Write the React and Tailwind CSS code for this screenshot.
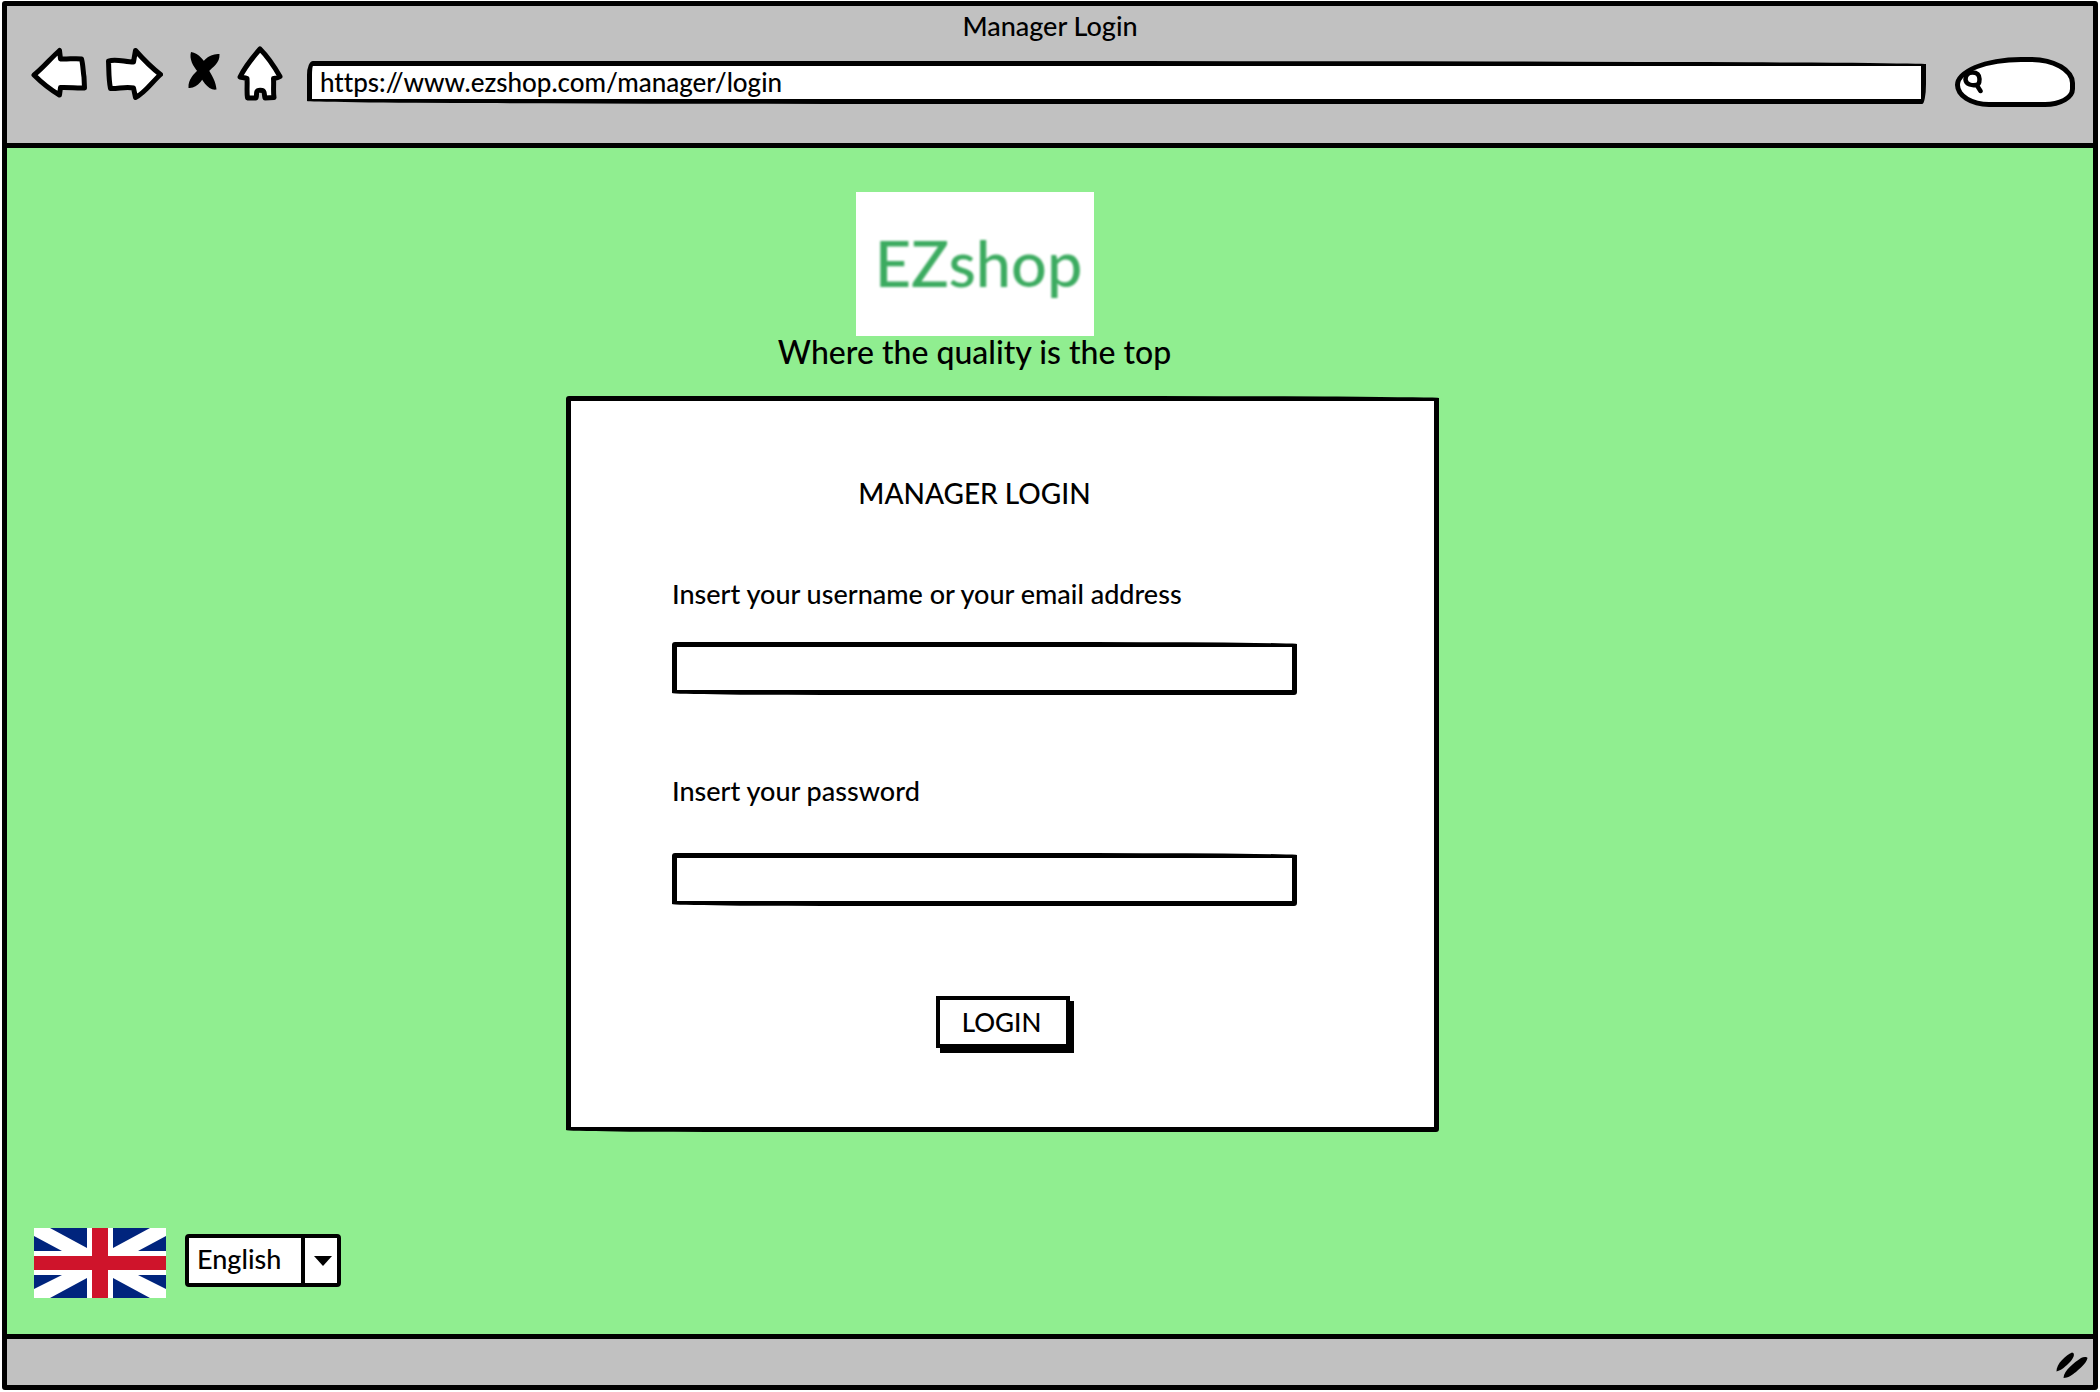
import React from "react";

const iconStroke = {
  fill: "#fff",
  stroke: "#000",
  strokeWidth: 5,
  strokeLinejoin: "round",
  strokeLinecap: "round",
};

function BackIcon() {
  return (
    <svg viewBox="0 0 56 56" className="h-14 w-14" aria-hidden="true">
      <path {...iconStroke} d="M3 30C12 23 20 13 28.500 5.500L29.500 14C37 14.500 44 13 50.500 14C52 19 52 26 53 32L53.500 43C46 43.500 38 42 29.500 42.500L28.500 50C20 45 11 38 3 30Z" />
    </svg>
  );
}

function ForwardIcon() {
  return (
    <svg viewBox="0 0 58 56" className="h-14 w-[58px]" aria-hidden="true">
      <path {...iconStroke} d="M3.500 16C11 13.500 20 17 28.500 17L30.500 5.500C38 14 47 23 55.500 29.500C47 37 40 48 30.500 52.500L28.500 43C21 41 13 44 5.500 43.500C3.500 34 4 25 3.500 16Z" />
    </svg>
  );
}

function StopIcon() {
  return (
    <svg viewBox="0 0 32 56" className="h-14 w-8" aria-hidden="true">
      <path d="M3 7C11 8 17 16 20 24C24 30 28 37 28.500 44.500C20 46 14 35 10 27C5 21 1 14 3 7Z" />
      <path d="M31.500 9C32 18 25 22 20 27C15 33 10 44 .5 43C0 34 6 29 10 25C13 17 21 8 31.500 9Z" />
    </svg>
  );
}

function HomeIcon() {
  return (
    <svg viewBox="0 0 46 56" className="h-14 w-[46px]" aria-hidden="true">
      <path {...iconStroke} d="M23 4C30 11 37 21 43 31.500C41 33 39 33 36.500 33.500C37 40 36 46 37 52.500L28 53C27 50 28 46 25.500 45.500C22 45 20.500 45 20 46.500C19 48 20 51 19 53L10.500 53C9.500 46 10.500 40 10 33.500C8 32.500 5 32.500 3 32C8 22 16 12 23 4Z" />
    </svg>
  );
}

function SearchIcon() {
  return (
    <svg viewBox="0 0 20 24" className="h-6 w-5" aria-hidden="true">
      <path d="M9.500 2.500C14 2.500 16.500 5 16.500 9C16.500 13 15.500 15 13 15C9.500 15.500 3 15 2.500 9.500C2.500 5 5.500 2.500 9.500 2.500ZM14 15.500L17.500 21" fill="none" stroke="#000" strokeWidth="4.500" strokeLinecap="round" />
    </svg>
  );
}

function Flag() {
  return (
    <svg viewBox="0 0 132 70" className="h-[70px] w-[132px]" role="img" aria-label="United Kingdom">
      <path fill="#fff" d="M0 0H132V70H0Z" />
      <path fill="#00247d" d="M16 0H53V20ZM116 0H79V20ZM16 70H53V50ZM116 70H79V50ZM0 8V23H28ZM132 8V23H104ZM0 61V47H28ZM132 61V47H104Z" />
      <path fill="#cf142b" d="M58 0H74V28H132V42H74V70H58V42H0V28H58Z" />
    </svg>
  );
}

function ResizeGrip() {
  return (
    <svg viewBox="0 0 32 27" className="h-[27px] w-8" aria-hidden="true">
      <path d="M.5 19.500C0 12 10 3 16 .5C20 1 17 7 14 10C10 14 6 18 .5 19.500Z" />
      <path d="M7.500 26C8 18 18 11 25 6C28 4.500 31 5 31.500 6C30 12 24 16 20 20C16 23 12 26 7.500 26Z" />
    </svg>
  );
}

function BrowserBar() {
  return (
    <header className="border-b-5 border-black bg-[#c1c1c1] pt-1 pb-9">
      <h1 className="text-center text-[27px] leading-8">Manager Login</h1>
      <div className="mt-[3px] flex items-end pr-[18px] pl-6">
        <nav aria-label="Browser" className="flex h-[62px] items-start">
          <button type="button" aria-label="Back"><BackIcon /></button>
          <button type="button" aria-label="Forward" className="ml-[18px]"><ForwardIcon /></button>
          <button type="button" aria-label="Stop" className="ml-[25px]"><StopIcon /></button>
          <button type="button" aria-label="Home" className="ml-[17px]"><HomeIcon /></button>
        </nav>
        <input
          type="text"
          aria-label="Address"
          defaultValue="https://www.ezshop.com/manager/login"
          className="mb-[3px] ml-6 h-[43px] min-w-0 flex-1 rounded-[6px_60%_4px_40%/14px_3px_20px_3px] border-5 border-black bg-white pb-0.5 pl-2 text-[26px] leading-8 outline-none"
        />
        <div className="relative ml-[29px] w-[120px]">
          <input
            type="search"
            aria-label="Search"
            className="block h-[50px] w-full appearance-none rounded-[66px_44px_30px_34px/28px_26px_18px_22px] border-5 border-black bg-white pr-3 pl-7 text-lg outline-none"
          />
          <span className="pointer-events-none absolute inset-y-0 left-2 flex items-center">
            <SearchIcon />
          </span>
        </div>
      </div>
    </header>
  );
}

function LoginCard() {
  return (
    <form
      onSubmit={(e) => e.preventDefault()}
      className="mt-7 flex w-full max-w-[873px] flex-col rounded-[3px_40%_3px_20%/3px_2px_3px_2px] border-5 border-black bg-white pt-[76px] pr-[137px] pb-[79px] pl-[101px]"
    >
      <h2 className="mr-5 text-center text-[28px] leading-8">MANAGER LOGIN</h2>
      <div className="mt-[69px]">
        <label htmlFor="username" className="block text-[27px] leading-8 whitespace-nowrap">
          Insert your username or your email address
        </label>
        <input
          id="username"
          type="text"
          className="mt-8 block h-[53px] w-full rounded-[3px_40%_3px_30%/3px_2px_3px_2px] border-5 border-black bg-white px-3 text-[26px] outline-none"
        />
      </div>
      <div className="mt-20">
        <label htmlFor="password" className="block text-[27px] leading-8">
          Insert your password
        </label>
        <input
          id="password"
          type="password"
          className="mt-[46px] block h-[53px] w-full rounded-[3px_40%_3px_30%/3px_2px_3px_2px] border-5 border-black bg-white px-3 text-[26px] outline-none"
        />
      </div>
      <button
        type="submit"
        className="mt-[90px] ml-9 h-[52px] w-[134px] self-center border-4 border-black bg-white pr-0.5 text-[26px] leading-8 shadow-[4px_5px_0_#000]"
      >
        LOGIN
      </button>
    </form>
  );
}

function LanguagePicker() {
  return (
    <div className="mt-auto flex items-start pb-9 pl-[27px]">
      <Flag />
      <div className="relative mt-1.5 ml-[19px]">
        <select
          aria-label="Language"
          defaultValue="English"
          className="block h-[53px] w-[156px] appearance-none rounded-[4px] border-4 border-black bg-white pb-1 pl-2 text-[27px] leading-8 outline-none"
        >
          <option>English</option>
        </select>
        <span className="pointer-events-none absolute inset-y-0 right-0 flex w-10 items-center justify-center border-l-4 border-black">
          <svg viewBox="0 0 18 10" className="h-2.5 w-[18px]" aria-hidden="true">
            <path d="M0 0H18L9 10Z" />
          </svg>
        </span>
      </div>
    </div>
  );
}

export default function App() {
  return (
    <div className="flex min-h-screen flex-col bg-white px-0.5 pt-px pb-0.5 font-['Lato',sans-serif] font-medium text-black [font-variant-ligatures:none]">
      <div className="flex flex-1 flex-col rounded-[3px] border-5 border-black bg-[#90ee90]">
        <BrowserBar />
        <main className="flex flex-1 flex-col pt-11">
          <div className="flex flex-col items-center pr-[95px]">
            <div className="mr-14 flex flex-col items-center">
              <div className="flex h-36 w-[238px] items-center justify-center bg-white pb-1 pl-2 text-[#3cab60]">
                <span className="text-[63px] leading-none blur-[1px]">EZshop</span>
              </div>
              <p className="text-center text-[32px] leading-8">Where the quality is the top</p>
            </div>
            <LoginCard />
          </div>
          <LanguagePicker />
        </main>
        <footer className="flex h-[51px] items-end justify-end border-t-5 border-black bg-[#c1c1c1] pr-[5px] pb-1.5">
          <ResizeGrip />
        </footer>
      </div>
    </div>
  );
}
